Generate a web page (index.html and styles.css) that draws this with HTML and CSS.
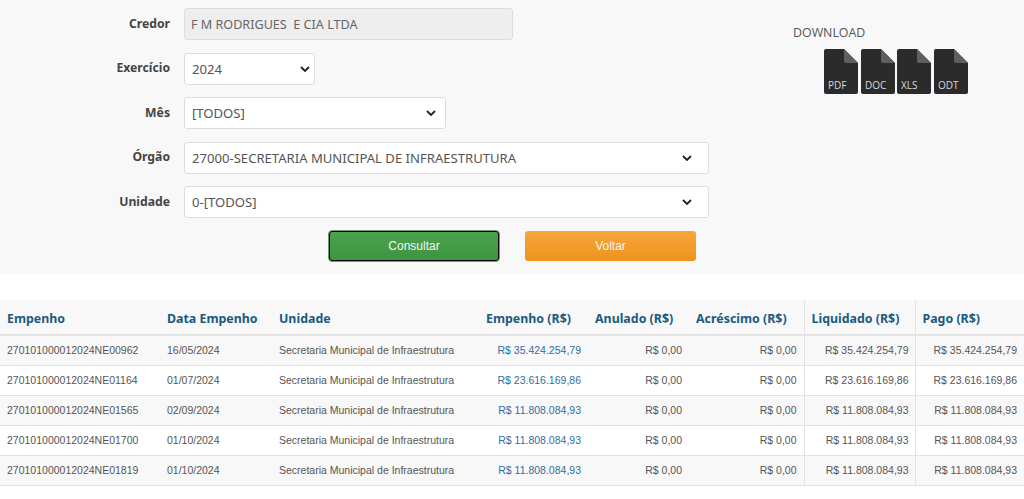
FILE: index.html
```html
<!DOCTYPE html>
<html lang="pt-BR">
<head>
  <meta charset="UTF-8">
  <title>Empenhos por Credor</title>
  <meta name="viewport" content="width=device-width, initial-scale=1.0">
  <link rel="stylesheet" href="styles.css">
</head>
<body>
  <section class="filters">
    <form class="filter-form">
      <div class="field">
        <label>Credor</label>
        <input class="input-credor" type="text" value="F M RODRIGUES  E CIA LTDA" disabled>
      </div>
      <div class="field">
        <label>Exercício</label>
        <select class="select-ano"><option>2024</option></select>
      </div>
      <div class="field">
        <label>Mês</label>
        <select class="select-mes"><option>[TODOS]</option></select>
      </div>
      <div class="field">
        <label>Órgão</label>
        <select class="select-wide"><option>27000-SECRETARIA MUNICIPAL DE INFRAESTRUTURA</option></select>
      </div>
      <div class="field">
        <label>Unidade</label>
        <select class="select-wide"><option>0-[TODOS]</option></select>
      </div>
      <div class="actions">
        <button type="button" class="btn btn-green">Consultar</button>
        <button type="button" class="btn btn-orange">Voltar</button>
      </div>
    </form>

    <div class="download">
      <h4>DOWNLOAD</h4>
      <div class="download-icons">
        <svg class="file-icon" viewBox="0 0 34 45"><path d="M2 0H20L34 14V43a2 2 0 0 1-2 2H2a2 2 0 0 1-2-2V2a2 2 0 0 1 2-2Z" fill="#2b2b2b"/><path d="M20 0L34 14H22a2 2 0 0 1-2-2Z" fill="#5f5f5f"/><text x="4" y="40">PDF</text></svg>
        <svg class="file-icon" viewBox="0 0 34 45"><path d="M2 0H20L34 14V43a2 2 0 0 1-2 2H2a2 2 0 0 1-2-2V2a2 2 0 0 1 2-2Z" fill="#2b2b2b"/><path d="M20 0L34 14H22a2 2 0 0 1-2-2Z" fill="#5f5f5f"/><text x="4" y="40">DOC</text></svg>
        <svg class="file-icon" viewBox="0 0 34 45"><path d="M2 0H20L34 14V43a2 2 0 0 1-2 2H2a2 2 0 0 1-2-2V2a2 2 0 0 1 2-2Z" fill="#2b2b2b"/><path d="M20 0L34 14H22a2 2 0 0 1-2-2Z" fill="#5f5f5f"/><text x="4" y="40">XLS</text></svg>
        <svg class="file-icon" viewBox="0 0 34 45"><path d="M2 0H20L34 14V43a2 2 0 0 1-2 2H2a2 2 0 0 1-2-2V2a2 2 0 0 1 2-2Z" fill="#2b2b2b"/><path d="M20 0L34 14H22a2 2 0 0 1-2-2Z" fill="#5f5f5f"/><text x="4" y="40">ODT</text></svg>
      </div>
    </div>
  </section>

  <table class="results">
    <colgroup>
      <col style="width:160px"><col style="width:112px"><col style="width:207px"><col style="width:109px">
      <col style="width:101px"><col style="width:115px"><col style="width:111px"><col style="width:109px">
    </colgroup>
    <thead>
      <tr>
        <th>Empenho</th>
        <th>Data Empenho</th>
        <th>Unidade</th>
        <th>Empenho (R$)</th>
        <th>Anulado (R$)</th>
        <th>Acréscimo (R$)</th>
        <th class="sep">Liquidado (R$)</th>
        <th class="sep">Pago (R$)</th>
      </tr>
    </thead>
    <tbody>
      <tr>
        <td>270101000012024NE00962</td><td>16/05/2024</td><td>Secretaria Municipal de Infraestrutura</td>
        <td class="num"><a href="#">R$ 35.424.254,79</a></td><td class="num">R$ 0,00</td><td class="num">R$ 0,00</td>
        <td class="num sep liq">R$ 35.424.254,79</td><td class="num sep">R$ 35.424.254,79</td>
      </tr>
      <tr>
        <td>270101000012024NE01164</td><td>01/07/2024</td><td>Secretaria Municipal de Infraestrutura</td>
        <td class="num"><a href="#">R$ 23.616.169,86</a></td><td class="num">R$ 0,00</td><td class="num">R$ 0,00</td>
        <td class="num sep liq">R$ 23.616.169,86</td><td class="num sep">R$ 23.616.169,86</td>
      </tr>
      <tr>
        <td>270101000012024NE01565</td><td>02/09/2024</td><td>Secretaria Municipal de Infraestrutura</td>
        <td class="num"><a href="#">R$ 11.808.084,93</a></td><td class="num">R$ 0,00</td><td class="num">R$ 0,00</td>
        <td class="num sep liq">R$ 11.808.084,93</td><td class="num sep">R$ 11.808.084,93</td>
      </tr>
      <tr>
        <td>270101000012024NE01700</td><td>01/10/2024</td><td>Secretaria Municipal de Infraestrutura</td>
        <td class="num"><a href="#">R$ 11.808.084,93</a></td><td class="num">R$ 0,00</td><td class="num">R$ 0,00</td>
        <td class="num sep liq">R$ 11.808.084,93</td><td class="num sep">R$ 11.808.084,93</td>
      </tr>
      <tr>
        <td>270101000012024NE01819</td><td>01/10/2024</td><td>Secretaria Municipal de Infraestrutura</td>
        <td class="num"><a href="#">R$ 11.808.084,93</a></td><td class="num">R$ 0,00</td><td class="num">R$ 0,00</td>
        <td class="num sep liq">R$ 11.808.084,93</td><td class="num sep">R$ 11.808.084,93</td>
      </tr>
    </tbody>
  </table>
</body>
</html>
```

FILE: styles.css
```css
:root {
  --panel: #f8f8f8;
  --line: #e3e3e3;
  --head-text: #1b5a80;
  --text: #555555;
}

* {
  box-sizing: border-box;
}

body {
  margin: 0;
  background: #ffffff;
  color: var(--text);
  font-family: 'Noto Sans', sans-serif;
  overflow: hidden;
}

.filters {
  display: flex;
  height: 274px;
  padding-top: 8px;
  margin-bottom: 26px;
  background: var(--panel);
}

.filter-form {
  display: flex;
  flex-direction: column;
  gap: 12.6px;
  width: 709px;
}

.field {
  display: flex;
  align-items: center;
  gap: 14px;
  height: 32px;
}

.field label {
  width: 170px;
  padding-bottom: 2px;
  text-align: right;
  font-size: 12.2px;
  font-weight: 700;
  color: #444444;
}

.input-credor,
.field select {
  height: 32px;
  padding: 0 4px 0 6px;
  border: 1px solid #dcdcdc;
  border-radius: 3px;
  background-color: #ffffff;
  color: var(--text);
  font-family: 'Noto Sans', sans-serif;
  font-size: 13.1px;
}

.field select {
  padding-left: 7px;
  appearance: none;
  background-image: url("data:image/svg+xml,%3Csvg xmlns='http://www.w3.org/2000/svg' width='10' height='6'%3E%3Cpath d='M1 1l4 4 4-4' fill='none' stroke='%23222' stroke-width='1.8'/%3E%3C/svg%3E");
  background-repeat: no-repeat;
}

.input-credor {
  width: 329px;
  background: #eeeeee;
  font-size: 12.6px;
  color: #666666;
}

.select-ano { width: 131px; background-position: right 4px center; }
.select-mes { width: 262px; background-position: right 9px center; }
.select-wide { width: 525px; background-position: right 16px center; }

.actions {
  display: flex;
  gap: 26px;
  padding-left: 329px;
}

.btn {
  width: 171px;
  height: 30px;
  border: none;
  border-radius: 3px;
  color: #f4f4f4;
  font-family: 'Liberation Sans', sans-serif;
  font-size: 12px;
  cursor: pointer;
}

.btn-green {
  width: 170px;
  background: linear-gradient(#4ba34e, #3c9440);
  box-shadow: inset 0 0 0 1px #000000;
  outline: 1px solid #6f9a72;
}

.btn-orange {
  background: linear-gradient(#f7a63c, #ec931c);
}

.download {
  padding: 16px 0 0 84px;
}

.download h4 {
  margin: 0 0 8px;
  font-size: 12.4px;
  font-weight: 400;
  color: #555555;
  font-family: 'Open Sans', sans-serif;
}

.download-icons {
  display: flex;
  gap: 2.5px;
  padding-left: 31px;
}

.file-icon {
  width: 34px;
  height: 45px;
}

.file-icon text {
  fill: #d8d8d8;
  font-family: 'Open Sans', sans-serif;
  font-size: 10px;
}

.results {
  width: 1024px;
  table-layout: fixed;
  border-collapse: collapse;
  font-family: 'Liberation Sans', sans-serif;
  font-size: 10.5px;
}

.results th {
  height: 35px;
  padding: 2px 7px 0;
  text-align: left;
  font-family: 'Noto Sans', sans-serif;
  font-size: 12.4px;
  font-weight: 700;
  color: var(--head-text);
  background: var(--panel);
  border-bottom: 2px solid var(--line);
}

.results td {
  height: 30px;
  padding: 0 7px;
  border-bottom: 1px solid var(--line);
}

.results tbody tr:nth-child(odd) td {
  background: var(--panel);
}

.results .num {
  text-align: right;
}

.results .liq {
  padding-right: 6px;
}

.results .sep {
  border-left: 1px solid var(--line);
}

.results a {
  color: #2f6fa3;
  text-decoration: none;
}
```
